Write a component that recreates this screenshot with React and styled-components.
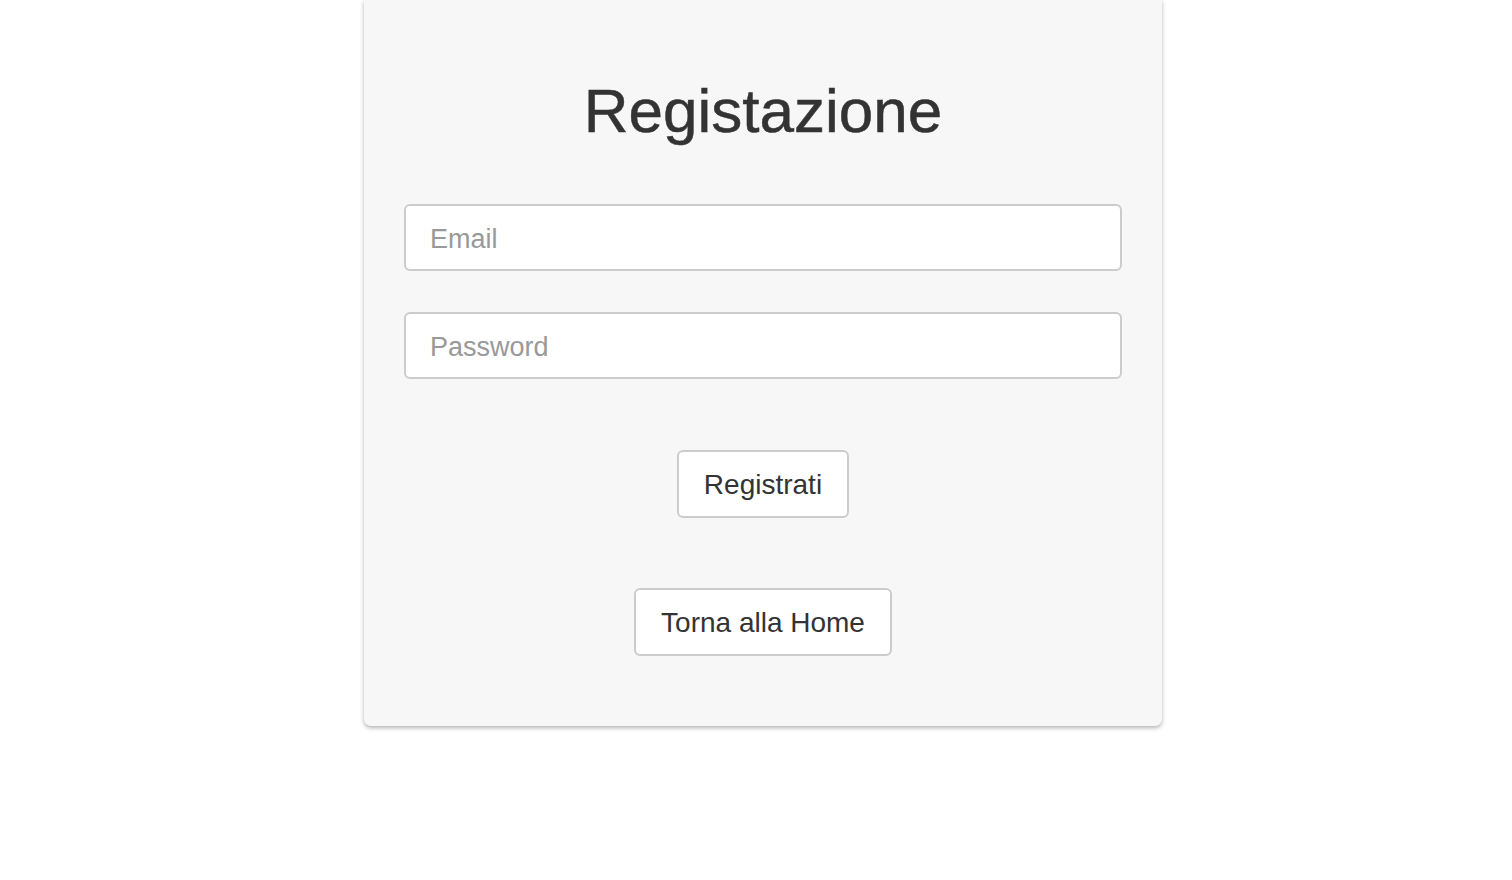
import React from "react";
import styled, { createGlobalStyle } from "styled-components";

const GlobalStyle = createGlobalStyle`
  body {
    margin: 0;
    background: #fff;
    font-family: "Liberation Sans", Arial, sans-serif;
    color: #333;
  }
`;

const Page = styled.div`
  display: flex;
  justify-content: center;
  padding-left: 14px;
  min-height: 880px;
`;

const Card = styled.form`
  width: 798px;
  height: 726px;
  box-sizing: border-box;
  background: #f7f7f7;
  border-radius: 0 0 7px 7px;
  box-shadow: 0 2px 4px rgba(0, 0, 0, 0.3);
  padding: 78px 40px 70px;
  display: flex;
  flex-direction: column;
  align-items: center;
`;

const Title = styled.h1`
  margin: 0 0 60px;
  font-size: 62px;
  font-weight: 400;
  line-height: 66px;
  color: #333;
  -webkit-text-stroke: 0.5px #333;
`;

const Input = styled.input`
  width: 100%;
  height: 67px;
  box-sizing: border-box;
  border: 2px solid #ccc;
  border-radius: 6px;
  background: #fff;
  padding: 3px 24px 0;
  margin-bottom: ${({ $gap }) => $gap}px;
  font-family: "Liberation Sans", Arial, sans-serif;
  font-size: 27px;
  color: #333;
  outline: none;

  &::placeholder {
    color: #999;
  }
`;

const Button = styled.button`
  height: 68px;
  box-sizing: border-box;
  border: 2px solid #ccc;
  border-radius: 6px;
  background: #fff;
  padding: 1px 25px 0;
  margin-bottom: ${({ $gap }) => $gap}px;
  font-family: "Liberation Sans", Arial, sans-serif;
  font-size: 28px;
  color: #333;
  cursor: pointer;
`;

export default function App() {
  return (
    <>
      <GlobalStyle />
      <Page>
        <Card onSubmit={(e) => e.preventDefault()}>
          <Title>Registazione</Title>
          <Input type="email" placeholder="Email" $gap={41} />
          <Input type="password" placeholder="Password" $gap={71} />
          <Button type="submit" $gap={70}>
            Registrati
          </Button>
          <Button type="button" $gap={0}>
            Torna alla Home
          </Button>
        </Card>
      </Page>
    </>
  );
}
